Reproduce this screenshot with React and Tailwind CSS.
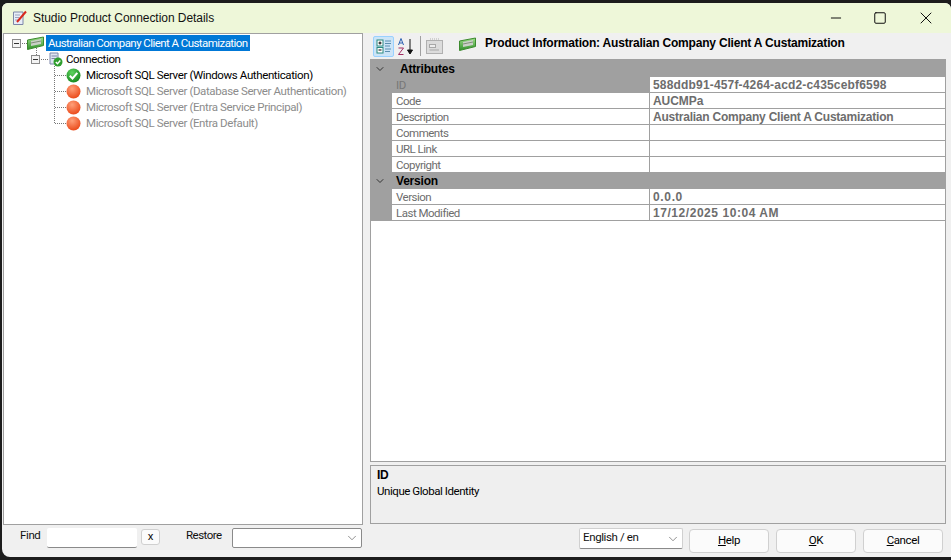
import { ChevronDown, X, Minus, Square } from "lucide-react";

const boldFont = "font-['Liberation_Sans',sans-serif] font-bold text-[12px]";

function ProductIcon() {
  return (
    <svg width="17" height="14" viewBox="0 0 17 14" className="shrink-0">
      <defs>
        <linearGradient id="pg" x1="0" y1="0" x2="0" y2="1">
          <stop offset="0" stopColor="#9fe08a" />
          <stop offset="1" stopColor="#2f8f2a" />
        </linearGradient>
      </defs>
      <path d="M0.500 4 L16.500 1 V9.500 L0.500 13.500 Z" fill="url(#pg)" stroke="#3c8a2e" />
      <path d="M4 5 L14 3 V8 L4 10 Z" fill="#c9d0c6" />
      <path d="M4 7 L14 5" stroke="#7f8f78" />
    </svg>
  );
}

function ConnectionIcon() {
  return (
    <svg width="14" height="15" viewBox="0 0 14 15" className="shrink-0">
      <path d="M1 1 H9 V12 H1 Z" fill="#dfe4f2" stroke="#7d86a8" />
      <path d="M2.500 4 H8 M2.500 6.500 H6" stroke="#7d86a8" />
      <circle cx="9" cy="10" r="4.500" fill="#2f9e2f" />
      <path d="M6.800 10 L8.500 11.800 L11.300 8.500" stroke="white" strokeWidth="1.400" fill="none" />
    </svg>
  );
}

function StatusIcon({ ok }) {
  return (
    <svg width="15" height="15" viewBox="0 0 15 15" className="shrink-0">
      <defs>
        <radialGradient id="g1" cx="0.4" cy="0.3" r="0.8">
          <stop offset="0" stopColor="#5fd35f" />
          <stop offset="1" stopColor="#0e7f16" />
        </radialGradient>
        <radialGradient id="r1" cx="0.4" cy="0.3" r="0.8">
          <stop offset="0" stopColor="#ffa07a" />
          <stop offset="1" stopColor="#e8400f" />
        </radialGradient>
      </defs>
      <circle cx="7.500" cy="7.500" r="7" fill={ok ? "url(#g1)" : "url(#r1)"} />
      {ok && <path d="M3.800 7.800 L6.500 10.500 L11.300 4.800" stroke="white" strokeWidth="2" fill="none" />}
    </svg>
  );
}

function Expander() {
  return (
    <span className="w-[9px] h-[9px] border border-[#8a8a8a] bg-[#f4f4f4] flex items-center justify-center shrink-0">
      <span className="w-[5px] h-px bg-[#333]" />
    </span>
  );
}

function TreeRow({ pad, children }) {
  return <div className={`flex items-center h-4 ${pad}`}>{children}</div>;
}

function Leaf({ label, ok }) {
  return (
    <TreeRow pad="pl-[62px]">
      <StatusIcon ok={ok} />
      <span className={`ml-[5px] h-4 leading-4 whitespace-nowrap ${ok ? "text-black" : "text-[#8c8c8c]"}`}>{label}</span>
    </TreeRow>
  );
}

function Row({ label, value, dim, track = "tracking-[-0.23px]" }) {
  return (
    <div className="flex h-4">
      <div className={`w-[257px] shrink-0 pl-[4px] leading-4 tracking-[-0.5px] border-b border-[#a0a0a0] ${dim ? "bg-[#a0a0a0] text-[#777]" : "bg-white text-[#6d6d6d]"}`}>{label}</div>
      <div className={`flex-1 bg-white border-l border-b border-[#a0a0a0] pl-[3px] leading-4 text-[#6d6d6d] whitespace-nowrap ${boldFont} ${track}`}>{value}</div>
    </div>
  );
}

function Group({ title, tight, children }) {
  return (
    <div>
      <div className={`flex items-center bg-[#a0a0a0] text-black tracking-[-0.2px] ${boldFont} ${tight ? "h-4" : "h-[18px] pt-px"}`}>
        <ChevronDown size={12} strokeWidth={2} className="ml-[3px] text-[#333]" />
        <span className={tight ? "ml-[10px]" : "ml-[14px]"}>{title}</span>
      </div>
      <div className="pl-[21px] bg-[#a0a0a0]">{children}</div>
    </div>
  );
}

function Btn({ children }) {
  return <div className="w-[80px] h-[24px] mt-[4px] bg-[#fbfbfb] border border-[#d0d0d0] rounded-[4px] flex items-center justify-center text-black">{children}</div>;
}

export default function App() {
  return (
    <div className="w-[951px] h-[560px] bg-[#1c1c1c] pt-[3px] pl-[2px] pb-[3px] overflow-hidden text-[11.5px] tracking-[-0.38px] font-['Roboto',sans-serif]">
      <div className="h-full flex flex-col bg-[#f0f0f0] rounded-tl-[6px] rounded-tr-[6px] rounded-bl-[8px] overflow-hidden">
        {/* Title bar */}
        <div className="h-[30px] shrink-0 bg-[#eef7d9] flex items-center">
          <svg width="16" height="16" viewBox="0 0 16 16" className="ml-[10px]">
            <path d="M1.500 2 H11 V14.500 H1.500 Z" fill="#e8edf7" stroke="#7d86a8" />
            <path d="M3 5 H8 M3 7.500 H7 M3 10 H6" stroke="#9aa3c0" />
            <path d="M5 12 L14 1.500" stroke="#d8281e" strokeWidth="2" />
          </svg>
          <span className="ml-[5px] text-[12px] text-[#111] tracking-[-0.05px] font-['Liberation_Sans',sans-serif]">Studio Product Connection Details</span>
          <div className="ml-auto flex items-center text-[#111]">
            <Minus size={16} absoluteStrokeWidth strokeWidth={1} className="mr-[29px]" />
            <Square size={14} absoluteStrokeWidth strokeWidth={1} className="mr-[29px]" />
            <X size={20} absoluteStrokeWidth strokeWidth={1} className="mr-[15px]" />
          </div>
        </div>

        {/* Panels */}
        <div className="flex-1 min-h-0 flex">
          <div className="w-[360px] ml-px shrink-0 bg-white border border-[#a0a0a0] pt-px relative">
            {/* dotted tree connectors */}
            <svg width="80" height="100" className="absolute left-0 top-0">
              <path d="M18 9.500 H23 M32.500 14 V21 M37 25.500 H44 M50.500 32 V89.500 M51 41.500 H62 M51 57.500 H62 M51 73.500 H62 M51 89.500 H62" stroke="#777" strokeDasharray="1 1" fill="none" />
            </svg>
            <TreeRow pad="pl-[8px]">
              <Expander />
              <span className="ml-[6px]"><ProductIcon /></span>
              <span className="ml-[2px] bg-[#0078d7] text-white px-[2px] h-4 leading-4 tracking-[-0.56px] whitespace-nowrap">Australian Company Client A Custamization</span>
            </TreeRow>
            <TreeRow pad="pl-[27px]">
              <Expander />
              <span className="ml-[9px]"><ConnectionIcon /></span>
              <span className="ml-[3px] h-4 leading-4 text-black">Connection</span>
            </TreeRow>
            <Leaf ok label="Microsoft SQL Server (Windows Authentication)" />
            <Leaf label="Microsoft SQL Server (Database Server Authentication)" />
            <Leaf label="Microsoft SQL Server (Entra Service Principal)" />
            <Leaf label="Microsoft SQL Server (Entra Default)" />
          </div>

          <div className="w-[576px] ml-[7px] shrink-0 flex flex-col">
            {/* Property toolbar */}
            <div className="h-[26px] shrink-0 flex items-center pl-[3px]">
              <div className="w-[21px] h-[21px] bg-[#cce4f7] border border-[#99d1ff] rounded-[2px] flex items-center justify-center">
                <svg width="16" height="15" viewBox="0 0 16 15">
                  <rect x="1" y="1" width="6" height="6" fill="#fff" stroke="#2a8a80" />
                  <rect x="1" y="8.500" width="6" height="5.500" fill="#fff" stroke="#2a8a80" />
                  <path d="M2.500 4 H5.500 M4 2.500 V5.500 M2.500 11 H5.500" stroke="#000" />
                  <path d="M9 2 H15 M9 4.500 H15 M9 7 H14 M9 10 H15 M9 12.500 H14" stroke="#5a8fb0" />
                </svg>
              </div>
              <div className="w-[24px] h-[21px] flex items-center justify-center">
                <svg width="18" height="19" viewBox="0 0 18 19">
                  <path d="M1.500 8 L4 1.500 L6.500 8 M2.500 6 H5.500" stroke="#2a5fb0" fill="none" />
                  <path d="M1.500 11 H6.500 L1.500 17.500 H6.500" stroke="#a02a60" fill="none" />
                  <path d="M13 2 V16 M10.500 13 L13 17 L15.500 13 Z" stroke="#111" fill="#111" />
                </svg>
              </div>
              <div className="w-px h-[20px] bg-[#a0a0a0] ml-[2px]" />
              <div className="ml-[5px] w-[17px] h-[17px] flex items-center justify-center">
                <svg width="17" height="16" viewBox="0 0 17 16">
                  <rect x="0.500" y="2.500" width="16" height="13" fill="#dcdcdc" stroke="#b0b0b0" />
                  <path d="M4 1 H13" stroke="#b0b0b0" strokeDasharray="1 1" />
                  <rect x="3.500" y="6.500" width="6" height="3" fill="#eee" stroke="#a8a8a8" />
                  <path d="M3.500 12 H13" stroke="#a8a8a8" />
                </svg>
              </div>
              <div className="ml-[16px] -mt-[5px]"><ProductIcon /></div>
              <span className={`ml-[9px] -mt-[6px] text-black whitespace-nowrap tracking-[-0.19px] ${boldFont}`}>Product Information: Australian Company Client A Custamization</span>
            </div>

            {/* Property grid */}
            <div className="h-[403px] shrink-0 bg-white border-b border-r border-[#a0a0a0] border-l">
              <Group title="Attributes">
                <Row dim label="ID" value="588ddb91-457f-4264-acd2-c435cebf6598" track="tracking-[0.17px]" />
                <Row label="Code" value="AUCMPa" track="tracking-[-0.05px]" />
                <Row label="Description" value="Australian Company Client A Custamization" />
                <Row label="Comments" value="" />
                <Row label="URL Link" value="" />
                <Row label="Copyright" value="" />
              </Group>
              <Group tight title="Version">
                <Row label="Version" value="0.0.0" track="tracking-[0.65px]" />
                <Row label="Last Modified" value="17/12/2025 10:04 AM" track="tracking-[0.55px]" />
              </Group>
            </div>

            {/* Help panel */}
            <div className="h-[59px] mt-[3px] shrink-0 bg-[#efefef] border border-[#a0a0a0] pl-[6px] pt-px text-black">
              <div className={`h-4 leading-4 ${boldFont}`}>ID</div>
              <div className="h-4 leading-4 tracking-[-0.44px]">Unique Global Identity</div>
            </div>
          </div>
        </div>

        {/* Bottom bar */}
        <div className="h-[32px] shrink-0 flex items-start text-[#111]">
          <span className="ml-[18px] w-[27px] mt-[3px] h-[15px] leading-[15px]">Find</span>
          <div className="mt-[3px] w-[90px] h-[20px] bg-white border-b border-[#8a8a8a] rounded-[2px]" />
          <div className="mt-[4px] ml-[4px] w-[19px] h-[16px] bg-[#fbfbfb] border border-[#d0d0d0] rounded-[3px] flex items-center justify-center">x</div>
          <span className="ml-[26px] w-[46px] mt-[3px] h-[15px] leading-[15px] tracking-[-0.5px]">Restore</span>
          <div className="mt-[3px] w-[130px] h-[20px] bg-white border border-[#8a8a8a] rounded-[2px] flex items-center justify-end pr-[2px]">
            <ChevronDown size={14} strokeWidth={1} className="text-[#444]" />
          </div>
          <div className="mt-[3px] ml-[217px] w-[104px] h-[21px] bg-white border border-[#d0d0d0] border-b-[#8a8a8a] rounded-[2px] flex items-center pl-[3px] pr-[2px]">
            <span className="-mt-px">English / en</span>
            <ChevronDown size={14} strokeWidth={1} className="ml-auto text-[#444]" />
          </div>
          <div className="ml-[6px] flex gap-[7px]">
            <Btn><span><u>H</u>elp</span></Btn>
            <Btn><span><u>O</u>K</span></Btn>
            <Btn><span><u>C</u>ancel</span></Btn>
          </div>
        </div>
      </div>
    </div>
  );
}
